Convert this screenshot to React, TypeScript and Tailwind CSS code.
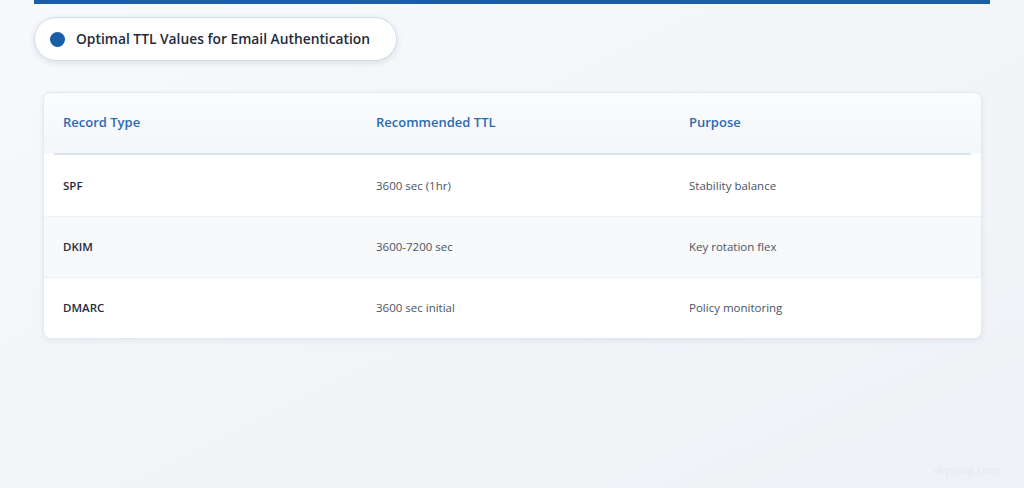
export default function App() {
  const rows = [
    ["SPF", "3600 sec (1hr)", "Stability balance"],
    ["DKIM", "3600-7200 sec", "Key rotation flex"],
    ["DMARC", "3600 sec initial", "Policy monitoring"],
  ];
  return (
    <div className="relative w-[1024px] h-[488px] overflow-hidden bg-gradient-to-br from-[#f7f9fb] to-[#eef2f6]" style={{ fontFamily: '"Open Sans", sans-serif' }}>
      <div className="ml-[34px] w-[956px] h-[4px] bg-[#1b5ea8]" />
      <div className="ml-[34px] mt-[13px] w-[363px] h-[44px] rounded-full bg-white border border-[#d3dce8] shadow-[0_2px_6px_rgba(30,60,110,0.12)] flex items-center pl-[15px] gap-[11px]">
        <div className="w-[15px] h-[15px] rounded-full bg-[#1b5ea8]" />
        <span className="text-[13.8px] font-semibold text-[#1f2a3a]">Optimal TTL Values for Email Authentication</span>
      </div>
      <div className="ml-[43px] mt-[31px] w-[939px] rounded-[8px] bg-white border border-[#e3e8ef] shadow-[0_2px_6px_rgba(30,60,110,0.08)] overflow-hidden">
        <div className="h-[60px] bg-gradient-to-b from-[#fbfcfd] to-[#f4f6f9] grid grid-cols-[313px_313px_1fr] items-center pl-[19px] text-[13px] font-semibold text-[#2a6bb3]">
          <div>Record Type</div>
          <div>Recommended TTL</div>
          <div>Purpose</div>
        </div>
        <div className="mx-[10px] h-[2px] bg-[#dde3ec]" />
        {rows.map((r, i) => (
          <div key={i} className={`h-[61px] grid grid-cols-[313px_313px_1fr] items-center pl-[19px] text-[11.5px] ${i === 1 ? "bg-[#f7f9fb]" : "bg-white"} ${i > 0 ? "border-t border-[#eef1f5]" : ""}`}>
            <div className="font-semibold text-[#1f2a3a]">{r[0]}</div>
            <div className="text-[#4a5463]">{r[1]}</div>
            <div className="text-[#4a5463]">{r[2]}</div>
          </div>
        ))}
      </div>
      <div className="absolute right-[25px] bottom-[10px] text-[11px] text-[#e6e9ee]">skysnag.com</div>
    </div>
  );
}
